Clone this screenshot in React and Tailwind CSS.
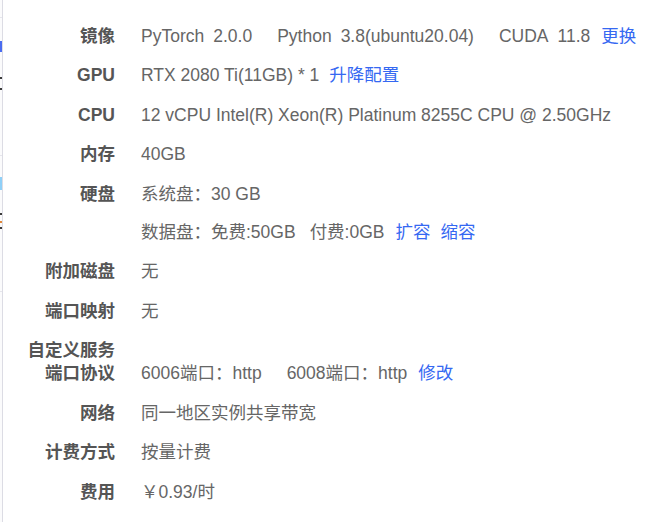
import React from "react";

const Label = ({ children }) => (
  <div className="w-[112px] shrink-0 text-right font-bold text-[#555]">{children}</div>
);

const Link = ({ children, className = "" }) => (
  <span className={"text-[#3568f2] " + className}>{children}</span>
);

function Row({ label, children, className = "" }) {
  return (
    <div className={"flex " + className}>
      <Label>{label}</Label>
      <div className="ml-[26px] flex items-center whitespace-nowrap text-[#666]">{children}</div>
    </div>
  );
}

export default function App() {
  return (
    <div
      className="flex h-[522px] w-[654px] overflow-hidden bg-white text-[17.5px] leading-[23px]"
      style={{ fontFamily: '"Liberation Sans", Arial, "Noto Sans CJK SC", sans-serif' }}
    >
      {/* sliver of the page underneath */}
      <div className="flex w-[2px] shrink-0 flex-col bg-[#fbfbfc]">
        <div className="h-[17px]" />
        <div className="h-px bg-[#e6e6ec]" />
        <div className="h-[23px]" />
        <div className="h-[11px] bg-[#4a6cf0]" />
        <div className="h-[25px]" />
        <div className="h-[2px] bg-[#3a3a3a]" />
        <div className="h-[9px]" />
        <div className="h-[2px] bg-[#3a3a3a]" />
        <div className="h-[65px]" />
        <div className="h-px bg-[#e6e6ec]" />
        <div className="h-[21px]" />
        <div className="h-[13px] bg-[#8fd0f8]" />
        <div className="h-[23px]" />
        <div className="h-[2px] bg-[#3a3a3a]" />
        <div className="h-[6px]" />
        <div className="h-[2px] bg-[#e0883a]" />
        <div className="h-[4px]" />
        <div className="h-[2px] bg-[#3a3a3a]" />
        <div className="h-[62px]" />
        <div className="h-px bg-[#e6e6ec]" />
      </div>

      <div className="flex flex-1 flex-col gap-[16.5px] border-l border-[#dcdce4] pt-[24.5px]">
        <Row label="镜像">
          <span>PyTorch</span>
          <span className="ml-[9px]">2.0.0</span>
          <span className="ml-[25px]">Python</span>
          <span className="ml-[9px]">3.8(ubuntu20.04)</span>
          <span className="ml-[25px]">CUDA</span>
          <span className="ml-[9px]">11.8</span>
          <Link className="ml-[11px]">更换</Link>
        </Row>
        <Row label="GPU">
          <span>RTX 2080 Ti(11GB) * 1</span>
          <Link className="ml-[10px]">升降配置</Link>
        </Row>
        <Row label="CPU">
          <span>12 vCPU Intel(R) Xeon(R) Platinum 8255C CPU @ 2.50GHz</span>
        </Row>
        <Row label="内存">
          <span>40GB</span>
        </Row>
        <div className="flex">
          <Label>硬盘</Label>
          <div className="ml-[26px] flex flex-col gap-[15px] whitespace-nowrap text-[#666]">
            <div>系统盘：30 GB</div>
            <div className="flex">
              <span>数据盘：免费:50GB</span>
              <span className="ml-[14px]">付费:0GB</span>
              <Link className="ml-[11px]">扩容</Link>
              <Link className="ml-[10px]">缩容</Link>
            </div>
          </div>
        </div>
        <Row label="附加磁盘">
          <span>无</span>
        </Row>
        <Row label="端口映射">
          <span>无</span>
        </Row>
        <div className="flex">
          <Label>
            <div>自定义服务</div>
            <div>端口协议</div>
          </Label>
          <div className="ml-[26px] flex items-center self-end whitespace-nowrap text-[#666]">
            <span>6006端口：http</span>
            <span className="ml-[25px]">6008端口：http</span>
            <Link className="ml-[11px]">修改</Link>
          </div>
        </div>
        <Row label="网络">
          <span>同一地区实例共享带宽</span>
        </Row>
        <Row label="计费方式">
          <span>按量计费</span>
        </Row>
        <Row label="费用">
          <span>￥0.93/时</span>
        </Row>
      </div>
    </div>
  );
}
